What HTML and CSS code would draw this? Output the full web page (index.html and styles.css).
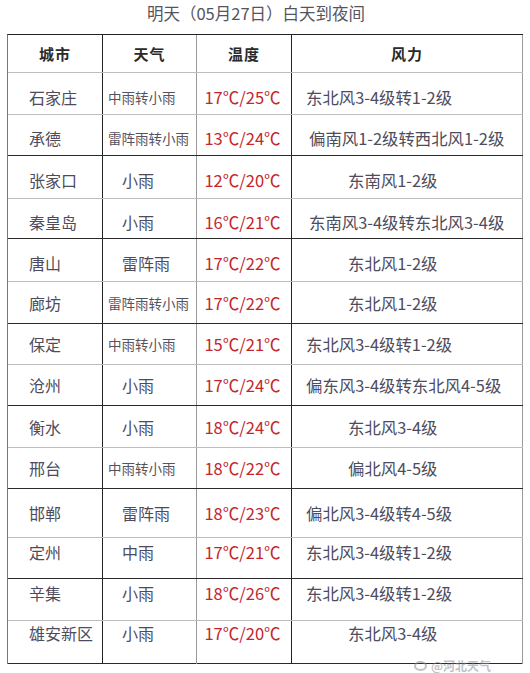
FILE: index.html
```html
<!DOCTYPE html>
<html lang="zh-CN">
<head>
<meta charset="utf-8">
<title>明天白天到夜间天气</title>
<link rel="stylesheet" href="styles.css">
</head>
<body>
<div class="page">
  <h1 class="title">明天（05月27日）白天到夜间</h1>
  <div class="grid">
    <div class="row head line-grey">
      <div class="cell c1 h">城市</div>
      <div class="cell c2 h">天气</div>
      <div class="cell c3 h">温度</div>
      <div class="cell c4 h center">风力</div>
    </div>
    <div class="row r42 line-grey low">
      <div class="cell c1 city">石家庄</div>
      <div class="cell c2 wx-s">中雨转小雨</div>
      <div class="cell c3 temp">17℃/25℃</div>
      <div class="cell c4 wind w-long">东北风3-4级转1-2级</div>
    </div>
    <div class="row r41 line-dark low">
      <div class="cell c1 city">承德</div>
      <div class="cell c2 wx-s">雷阵雨转小雨</div>
      <div class="cell c3 temp">13℃/24℃</div>
      <div class="cell c4 wind w-long2">偏南风1-2级转西北风1-2级</div>
    </div>
    <div class="row r43 line-grey low">
      <div class="cell c1 city">张家口</div>
      <div class="cell c2 wx-l">小雨</div>
      <div class="cell c3 temp">12℃/20℃</div>
      <div class="cell c4 wind w-short">东南风1-2级</div>
    </div>
    <div class="row r40 line-dark low">
      <div class="cell c1 city">秦皇岛</div>
      <div class="cell c2 wx-l">小雨</div>
      <div class="cell c3 temp">16℃/21℃</div>
      <div class="cell c4 wind w-long2">东南风3-4级转东北风3-4级</div>
    </div>
    <div class="row r43 line-grey low">
      <div class="cell c1 city">唐山</div>
      <div class="cell c2 wx-l">雷阵雨</div>
      <div class="cell c3 temp">17℃/22℃</div>
      <div class="cell c4 wind w-short">东北风1-2级</div>
    </div>
    <div class="row r42 line-dark">
      <div class="cell c1 city">廊坊</div>
      <div class="cell c2 wx-s">雷阵雨转小雨</div>
      <div class="cell c3 temp">17℃/22℃</div>
      <div class="cell c4 wind w-short">东北风1-2级</div>
    </div>
    <div class="row r41 line-grey">
      <div class="cell c1 city">保定</div>
      <div class="cell c2 wx-s">中雨转小雨</div>
      <div class="cell c3 temp">15℃/21℃</div>
      <div class="cell c4 wind w-long">东北风3-4级转1-2级</div>
    </div>
    <div class="row r41 line-dark">
      <div class="cell c1 city">沧州</div>
      <div class="cell c2 wx-l">小雨</div>
      <div class="cell c3 temp">17℃/24℃</div>
      <div class="cell c4 wind w-long">偏东风3-4级转东北风4-5级</div>
    </div>
    <div class="row r42 line-grey">
      <div class="cell c1 city">衡水</div>
      <div class="cell c2 wx-l">小雨</div>
      <div class="cell c3 temp">18℃/24℃</div>
      <div class="cell c4 wind w-short">东北风3-4级</div>
    </div>
    <div class="row r41 line-dark">
      <div class="cell c1 city">邢台</div>
      <div class="cell c2 wx-s">中雨转小雨</div>
      <div class="cell c3 temp">18℃/22℃</div>
      <div class="cell c4 wind w-short">偏北风4-5级</div>
    </div>
    <div class="row r49 line-grey">
      <div class="cell c1 city">邯郸</div>
      <div class="cell c2 wx-l">雷阵雨</div>
      <div class="cell c3 temp">18℃/23℃</div>
      <div class="cell c4 wind w-long">偏北风3-4级转4-5级</div>
    </div>
    <div class="row r41 line-dark high">
      <div class="cell c1 city">定州</div>
      <div class="cell c2 wx-l">中雨</div>
      <div class="cell c3 temp">17℃/21℃</div>
      <div class="cell c4 wind w-long">东北风3-4级转1-2级</div>
    </div>
    <div class="row r42 line-grey high">
      <div class="cell c1 city">辛集</div>
      <div class="cell c2 wx-l">小雨</div>
      <div class="cell c3 temp">18℃/26℃</div>
      <div class="cell c4 wind w-long">东北风3-4级转1-2级</div>
    </div>
    <div class="row r43 line-dark higher">
      <div class="cell c1 city">雄安新区</div>
      <div class="cell c2 wx-l">小雨</div>
      <div class="cell c3 temp">17℃/20℃</div>
      <div class="cell c4 wind w-short">东北风3-4级</div>
    </div>
  </div>
  <div class="watermark"><span class="wb-logo"></span>@河北天气</div>
</div>
</body>
</html>
```
FILE: styles.css
```css
html, body {
  margin: 0;
  padding: 0;
  background: #ffffff;
}
body {
  font-family: "Noto Sans CJK SC", "Noto Sans", sans-serif;
  width: 530px;
  height: 673px;
  overflow: hidden;
}
.page {
  position: relative;
  width: 530px;
  height: 673px;
}
.title {
  margin: 0;
  height: 34px;
  line-height: 27px;
  font-size: 16.5px;
  font-weight: 400;
  color: #555560;
  text-align: center;
  padding-right: 18px;
  box-sizing: border-box;
}
.grid {
  margin-left: 7px;
  width: 516px;
  box-sizing: border-box;
  border-top: 1px solid #222;
  border-left: 1px solid #777;
  display: flex;
  flex-direction: column;
}
.row {
  display: grid;
  grid-template-columns: 95px 94px 95px 231px;
  box-sizing: border-box;
}
.line-grey { border-bottom: 1px solid #bdbdbd; }
.line-dark { border-bottom: 1px solid #2a2a2a; }
.head { height: 38px; }
.r40 { height: 40px; }
.r41 { height: 41px; }
.r42 { height: 42px; }
.r43 { height: 43px; }
.r49 { height: 49px; }
.cell {
  display: flex;
  align-items: center;
  box-sizing: border-box;
  white-space: nowrap;
  color: #4e4c5c;
  font-size: 16px;
}
.low .cell { padding-top: 6px; }
.high .cell { padding-bottom: 13px; }
.higher .cell { padding-bottom: 19px; }
.c1 { border-right: 1px solid #222; }
.c2 { border-right: 1px solid #9a9a9a; }
.c3 { border-right: 1px solid #222; }
.c4 { border-right: 1px solid #9a9a9a; }
.h {
  justify-content: center;
  font-size: 15px;
  font-weight: 700;
  color: #2a2a2a;
  letter-spacing: 1px;
}
.city { padding-left: 21px; }
.wx-s {
  padding-left: 5px;
  font-size: 13.5px;
  color: #55535f;
}
.wx-l { padding-left: 19px; }
.temp {
  justify-content: center;
  padding-right: 3px;
  color: #c3262c;
  font-size: 16.5px;
}
.wind { font-size: 16.4px; }
.w-long { padding-left: 14px; }
.w-long2 { padding-left: 17px; }
.w-short { padding-left: 56px; }
.watermark {
  position: absolute;
  left: 414px;
  top: 659px;
  font-size: 12px;
  line-height: 13px;
  color: rgba(140, 140, 150, 0.55);
  display: flex;
  align-items: center;
  gap: 4px;
  font-weight: 700;
}
.wb-logo {
  display: inline-block;
  width: 13px;
  height: 10px;
  border: 2px solid rgba(140, 140, 150, 0.55);
  border-radius: 50%;
  box-sizing: border-box;
}
```
